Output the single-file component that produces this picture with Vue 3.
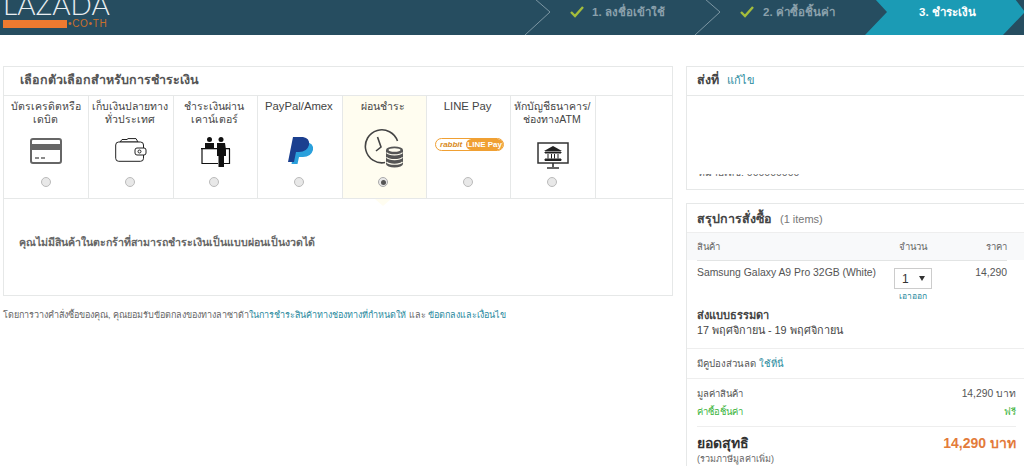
<script setup>
const tabs = [
  { label: 'บัตรเครดิตหรือ\nเดบิต', icon: 'card' },
  { label: 'เก็บเงินปลายทาง\nทั่วประเทศ', icon: 'wallet' },
  { label: 'ชำระเงินผ่าน\nเคาน์เตอร์', icon: 'counter' },
  { label: 'PayPal/Amex', icon: 'paypal', latin: true },
  { label: 'ผ่อนชำระ', icon: 'clock', active: true },
  { label: 'LINE Pay', icon: 'line', latin: true },
  { label: 'หักบัญชีธนาคาร/\nช่องทางATM', icon: 'bank' }
]
</script>

<template>
  <div class="page">
    <header class="topbar">
      <div class="logo">
        <div class="wordmark">LAZADA</div>
        <div class="domain"><span class="bar"></span><span class="co">•CO•TH</span></div>
      </div>
      <svg class="chevrons" width="1024" height="35" viewBox="0 0 1024 35">
        <polygon points="875,-1 887,12 865,35 1003,35 1025,12 1015,-1" fill="#1b9bb5" />
        <path d="M525 35 L550 12 L535 -1 M695 35 L720 12 L705 -1" fill="none" stroke="#7d97a3" stroke-width="1" />
        <path d="M571 12 l4 4 l8 -9 M741 12 l4 4 l8 -9" fill="none" stroke="#a4bd3c" stroke-width="2.4" />
      </svg>
      <div class="step s1">1. ลงชื่อเข้าใช้</div>
      <div class="step s2">2. ค่าซื้อชิ้นค่า</div>
      <div class="step s3">3. ชำระเงิน</div>
    </header>

    <main class="content">
      <section class="left">
        <div class="card pay">
          <h2 class="pay-title">เลือกตัวเลือกสำหรับการชำระเงิน</h2>
          <div class="tabs">
            <div v-for="t in tabs" :key="t.icon" class="tab" :class="{ active: t.active }">
              <div class="tab-label" :class="{ latin: t.latin }">{{ t.label }}</div>
              <div class="tab-icon">
                <svg v-if="t.icon === 'card'" width="32" height="26" viewBox="0 0 32 26">
                  <rect x="1" y="1" width="30" height="24" rx="2" fill="#fff" stroke="#666" stroke-width="2" />
                  <rect x="1" y="6" width="30" height="6" fill="#666" />
                  <path d="M5 20h4M11 20h4" stroke="#666" stroke-width="1.5" />
                </svg>
                <svg v-else-if="t.icon === 'wallet'" class="i-wallet" width="32" height="24" viewBox="0 0 32 24">
                  <path d="M5 4 L7 1.5 H12 L13 .6 H21 L23 4 Z" fill="#fff" stroke="#222" stroke-width="1" />
                  <rect x=".7" y="4" width="27.8" height="19.3" rx="3" fill="#fff" stroke="#222" stroke-width="1" />
                  <rect x="20" y="10" width="11" height="7" rx="2" fill="#fff" stroke="#222" />
                  <circle cx="24.5" cy="13.5" r="1.5" fill="none" stroke="#222" />
                </svg>
                <svg v-else-if="t.icon === 'counter'" class="i-counter" width="32" height="30" viewBox="0 0 32 30">
                  <circle cx="9.5" cy="2.6" r="2.5" fill="#111" />
                  <circle cx="21" cy="2.6" r="2.5" fill="#111" />
                  <path d="M5 6 H14 V11 H5 Z M17 6 H25 L26 13 V19 H24 V30 H18.5 V19 H17 Z" fill="#111" />
                  <path d="M1 11 H30 V12.3 H1 Z" fill="#111" />
                  <path d="M2 12 V26.5 H18 M24 26.5 H29.5 V12" fill="none" stroke="#111" stroke-width="1.2" />
                </svg>
                <svg v-else-if="t.icon === 'paypal'" class="i-paypal" width="26" height="28" viewBox="0 0 26 28">
                  <path d="M8 5 H18 Q26 6 25 13 Q23 20 15 20 H11 L9.5 27 H3.5 Z" fill="#2aa0dc" />
                  <path d="M5 0 H15 Q22 1 21 8 Q19 15 11 15 H8 L6 25 H0 Z" fill="#1b3f8f" />
                </svg>
                <svg v-else-if="t.icon === 'clock'" class="i-clock" width="41" height="40" viewBox="0 0 41 40">
                  <path d="M33.5 13 A16.5 16.5 0 1 0 21 34.5" fill="none" stroke="#444" stroke-width="1.6" />
                  <path d="M13.5 9 L17 19 L12 23" fill="none" stroke="#444" stroke-width="1.6" />
                  <path d="M22 22 A8.5 3.4 0 0 1 39 22 V36 A8.5 3.4 0 0 1 22 36 Z" fill="#555" />
                  <path d="M22.5 24.6 A8.5 3.4 0 0 0 38.5 24.6 M22.5 29.4 A8.5 3.4 0 0 0 38.5 29.4 M22.5 34 A8.5 3.4 0 0 0 38.5 34" fill="none" stroke="#fffdf0" stroke-width="1.2" />
                  <ellipse cx="30.5" cy="22" rx="6" ry="1.8" fill="#fffdf0" />
                </svg>
                <div v-else-if="t.icon === 'line'" class="pill i-line">
                  <span class="pill-a">rabbit</span><span class="pill-b">LINE Pay</span>
                </div>
                <svg v-else class="i-bank" width="32" height="27" viewBox="0 0 32 27">
                  <rect x="1" y="1" width="30" height="20" fill="#fff" stroke="#333" stroke-width="1.5" />
                  <path d="M16 4 L25 9 H7 Z" fill="#222" />
                  <path d="M8 10 H24 V11 H8 Z M8 17 H24 V18.5 H8 Z M11 12 V16.5 M14.5 12 V16.5 M17.5 12 V16.5 M21 12 V16.5" fill="#222" stroke="#222" stroke-width="1" />
                  <path d="M16 21 V25 M10 26 H22" stroke="#333" stroke-width="1.6" />
                </svg>
              </div>
              <span class="radio" :class="{ on: t.active }"></span>
            </div>
            <div class="tab-rest"></div>
          </div>
          <div class="pay-body">
            <span class="notch"></span>
            <p class="pay-msg">คุณไม่มีสินค้าในตะกร้าที่สามารถชำระเงินเป็นแบบผ่อนเป็นงวดได้</p>
          </div>
        </div>
        <p class="terms">โดยการวางคำสั่งซื้อของคุณ, คุณยอมรับข้อตกลงของทางลาซาด้า<a>ในการชำระสินค้าทางช่องทางที่กำหนดให้</a> และ <a>ข้อตกลงและเงื่อนไข</a></p>
      </section>

      <aside class="right">
        <div class="card ship">
          <div class="ship-head"><b>ส่งที่</b><a>แก้ไข</a></div>
          <div class="ship-body">
            <div class="clip"><span>หมายเลข: 000000000</span></div>
          </div>
        </div>
        <div class="card summary">
          <div class="sum-head"><b>สรุปการสั่งซื้อ</b><span>(1 items)</span></div>
          <div class="col-head">
            <span class="c1">สินค้า</span><span class="c2">จำนวน</span><span class="c3">ราคา</span>
          </div>
          <div class="item">
            <div class="item-row">
              <span class="c1">Samsung Galaxy A9 Pro 32GB (White)</span>
              <div class="c2">
                <div class="select"><span>1</span><i></i></div>
                <a class="remove">เอาออก</a>
              </div>
              <span class="c3">14,290</span>
            </div>
            <div class="delivery">
              <b>ส่งแบบธรรมดา</b>
              <div>17 พฤศจิกายน - 19 พฤศจิกายน</div>
            </div>
          </div>
          <div class="coupon">มีคูปองส่วนลด <a>ใช้ที่นี่</a></div>
          <div class="totals">
            <div class="t-row"><span>มูลค่าสินค้า</span><span class="amt">14,290 บาท</span></div>
            <div class="t-row green"><span>ค่าซื้อชิ้นค่า</span><span>ฟรี</span></div>
            <div class="t-grand">
              <b>ยอดสุทธิ</b><b class="price">14,290 บาท</b>
            </div>
            <small>(รวมภาษีมูลค่าเพิ่ม)</small>
          </div>
        </div>
      </aside>
    </main>
  </div>
</template>

<style>
html, body { margin: 0; background: #fff; overflow: hidden; }
</style>

<style scoped>
.page { width: 1024px; height: 474px; overflow: hidden; font-family: "Liberation Sans", "Noto Sans", sans-serif; font-size: 11px; color: #555; }
.topbar { position: relative; height: 35px; background: #264d60; overflow: hidden; }
.chevrons { position: absolute; left: 0; top: 0; }
.logo { position: absolute; left: 3px; top: 0; z-index: 1; }
.wordmark { position: absolute; left: 0; top: -8px; font: 300 28px/24px Lato, sans-serif; color: #e9eef1; }
.domain { position: absolute; top: 20px; left: 0; display: flex; align-items: center; white-space: nowrap; }
.bar { display: block; width: 64px; height: 8px; background: #ee7a30; }
.co { color: #c96f2d; font-size: 10px; line-height: 8px; letter-spacing: 0.7px; margin-left: 1px; }
.step { position: absolute; top: 5px; font-size: 11.5px; line-height: 14px; font-weight: 700; color: #8ba1ac; white-space: nowrap; }
.s1 { left: 592px; }
.s2 { left: 763px; }
.s3 { left: 919px; color: #fff; }

.content { display: flex; align-items: flex-start; padding: 31px 0 0 3px; gap: 13px; }
.left { width: 670px; flex: none; }
.card { border: 1px solid #e6e8e8; box-sizing: border-box; background: #fff; }
.pay { height: 230px; display: flex; flex-direction: column; }
.pay-title { margin: 0; height: 28px; line-height: 27px; padding-left: 16px; font-size: 12.5px; font-weight: 700; color: #555; border-bottom: 1px solid #e6e8e8; }
.tabs { display: flex; box-sizing: border-box; height: 103px; padding-left: 1px; border-bottom: 1px solid #e6e8e8; }
.tab { width: 84.4px; flex: none; box-sizing: border-box; padding-right: 2px; border-right: 1px solid #e6e8e8; display: flex; flex-direction: column; align-items: center; }
.tab.active { background: #fffdf0; }
.tab-rest { flex: 1; }
.tab-label { width: 80px; height: 29px; margin-top: 4px; font-size: 10.5px; line-height: 13px; text-align: center; color: #444; white-space: pre-line; }
.tab-label.latin { font-size: 11.3px; }
.tab-icon { height: 44px; width: 100%; display: flex; align-items: center; justify-content: center; }
.i-wallet { margin: -3px 0 0 1px; }
.i-counter { margin: 2px 0 0 3px; }
.i-paypal { margin-left: 4px; }
.i-clock { margin: -6px 0 0 3px; }
.i-line { margin: -13px 0 0 4px; }
.i-bank { margin: 8px 0 0 2px; }
.radio { box-sizing: border-box; width: 10px; height: 10px; border-radius: 50%; border: 1px solid #bbb; background: #e8e8e8; margin-top: 4px; position: relative; }
.radio.on { background: #e8e8e8; border-color: #aaa; }
.radio.on::after { content: ""; position: absolute; left: 1.5px; top: 1.5px; width: 5px; height: 5px; border-radius: 50%; background: #555; }
.pill { display: flex; flex: none; width: 69px; height: 13px; box-sizing: border-box; border: 1px solid #f0a033; border-radius: 7px; overflow: hidden; font-size: 8px; line-height: 11px; font-weight: 700; white-space: nowrap; }
.pill-a { width: 30px; text-align: center; color: #d98a22; font-style: italic; }
.pill-b { flex: 1; background: #f0a033; color: #fff; text-align: center; border-radius: 7px 0 0 7px; }
.pay-body { position: relative; flex: 1; }
.notch { position: absolute; left: 371px; top: 0; width: 0; height: 0; border-left: 8px solid transparent; border-right: 8px solid transparent; border-top: 7px solid #fffdf0; }
.pay-msg { margin: 36px 0 0 15px; font-size: 10.6px; line-height: 14px; font-weight: 700; color: #666; }
.terms { margin: 13px 0 0; font-size: 9px; line-height: 12px; color: #666; white-space: nowrap; }
a { color: #2a8a9e; }

.right { width: 350px; flex: none; display: flex; flex-direction: column; gap: 13px; }
.ship { height: 124px; }
.ship-head { height: 28px; line-height: 27px; padding-left: 10px; border-bottom: 1px solid #e6e8e8; display: flex; gap: 8px; font-size: 11px; }
.ship-head b { color: #444; font-size: 12.5px; }
.ship-body { padding: 78px 0 0 11px; }
.clip { height: 3px; overflow: hidden; font-size: 10.5px; line-height: 14px; color: #666; }
.clip span { display: block; margin-top: -9px; }
.summary { height: 263px; border-right: 0; border-bottom: 0; }
.sum-head { height: 29px; box-sizing: border-box; line-height: 30px; padding-left: 10px; display: flex; gap: 8px; font-size: 11px; color: #777; border-bottom: 1px solid #eee; }
.sum-head b { font-size: 12.5px; color: #444; }
.col-head { height: 27px; background: #f8f9fa; display: flex; align-items: center; padding: 0 17px 0 10px; width: 310px; font-size: 9.5px; color: #666; }
.c1 { flex: 1; white-space: nowrap; }
.c2 { width: 40px; text-align: center; margin-right: 34px; flex: none; }
.c3 { width: 40px; text-align: right; flex: none; }
.item { padding: 0 0 0 10px; border-bottom: 1px solid #eee; height: 89px; box-sizing: border-box; }
.item-row { width: 310px; border-top: 1px solid #e2e4e4; display: flex; align-items: flex-start; height: 48px; box-sizing: border-box; padding-top: 5px; font-size: 10.4px; line-height: 14px; color: #555; }
.select { box-sizing: border-box; width: 38px; height: 21px; border: 1px solid #ccc; margin-top: 2px; margin-left: 1px; display: flex; align-items: center; justify-content: space-between; padding: 0 6px 0 7px; font-size: 12px; color: #333; }
.select i { display: block; width: 0; height: 0; border-left: 3px solid transparent; border-right: 3px solid transparent; border-top: 5px solid #333; }
.remove { display: block; font-size: 8.5px; line-height: 12px; margin-top: 1px; }
.delivery { font-size: 10.8px; line-height: 15px; color: #444; }
.delivery b { display: block; color: #444; font-size: 11px; }
.coupon { height: 30px; line-height: 29px; box-sizing: border-box; padding-left: 10px; border-bottom: 1px solid #eee; font-size: 9.6px; color: #555; }
.totals { padding: 6px 7px 0 10px; width: 336px; box-sizing: border-box; }
.t-row { display: flex; justify-content: space-between; height: 18px; line-height: 17px; font-size: 9.5px; color: #555; }
.amt { font-size: 10.3px; }
.green { color: #3cb43c; }
.t-grand { border-top: 1px solid #eee; margin-top: 5px; padding-top: 7px; display: flex; justify-content: space-between; align-items: center; font-size: 14px; line-height: 18px; color: #333; }
.price { color: #e37b3a; font-size: 14px; }
small { display: block; margin-top: 1px; font-size: 9px; line-height: 12px; color: #666; }
</style>
